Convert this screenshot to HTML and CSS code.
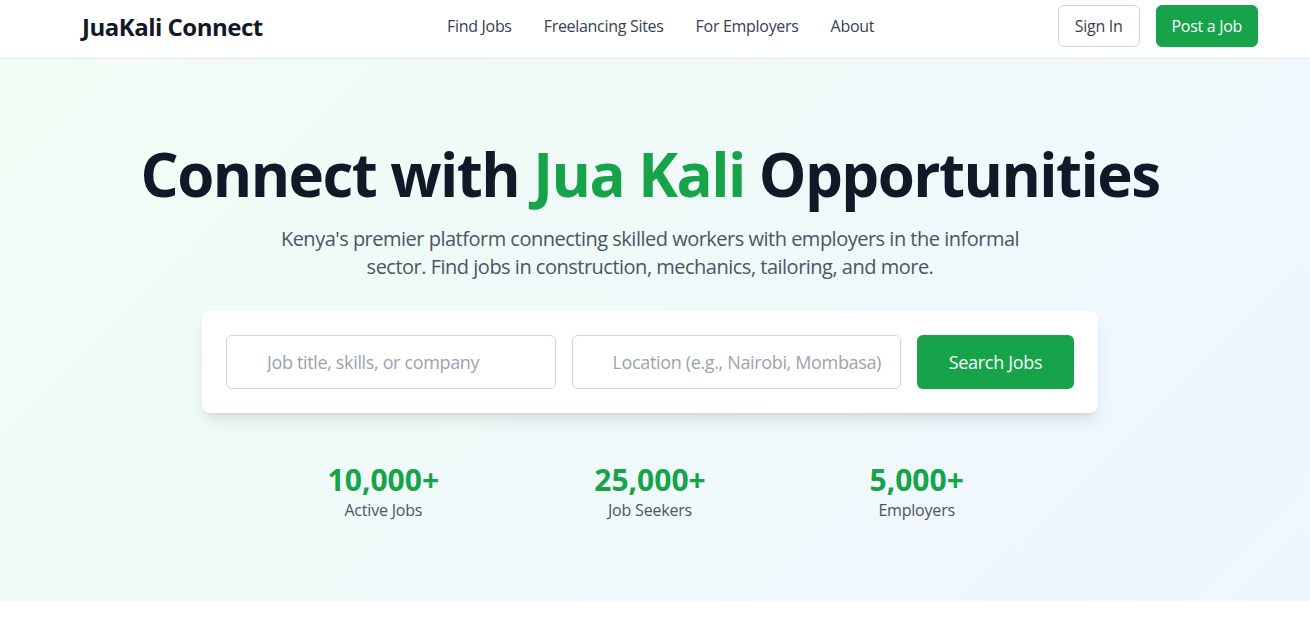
FILE: index.html
```html
<!DOCTYPE html>
<html lang="en">
<head>
<meta charset="utf-8">
<title>JuaKali Connect</title>
<link rel="stylesheet" href="styles.css">
</head>
<body>
<header class="site-header">
  <div class="header-inner">
    <div class="logo">JuaKali Connect</div>
    <nav class="main-nav">
      <a href="#">Find Jobs</a>
      <a href="#">Freelancing Sites</a>
      <a href="#">For Employers</a>
      <a href="#">About</a>
    </nav>
    <div class="header-actions">
      <button class="btn btn-outline">Sign In</button>
      <button class="btn btn-primary">Post a Job</button>
    </div>
  </div>
</header>
<section class="hero">
  <div class="hero-inner">
    <h1 class="hero-title">Connect with <span class="accent">Jua Kali</span> Opportunities</h1>
    <p class="hero-sub">Kenya's premier platform connecting skilled workers with employers in the informal sector. Find jobs in construction, mechanics, tailoring, and more.</p>
    <form class="search-card">
      <input class="search-input" type="text" placeholder="Job title, skills, or company">
      <input class="search-input" type="text" placeholder="Location (e.g., Nairobi, Mombasa)">
      <button type="button" class="btn-search">Search Jobs</button>
    </form>
    <div class="stats">
      <div class="stat"><div class="stat-num">10,000+</div><div class="stat-label">Active Jobs</div></div>
      <div class="stat"><div class="stat-num">25,000+</div><div class="stat-label">Job Seekers</div></div>
      <div class="stat"><div class="stat-num">5,000+</div><div class="stat-label">Employers</div></div>
    </div>
  </div>
</section>
</body>
</html>
```
FILE: styles.css
```css
* { box-sizing: border-box; }
html, body { margin: 0; padding: 0; }
body {
  font-family: "Open Sans", "Noto Sans", "Liberation Sans", sans-serif;
  color: #111827;
  background: #fff;
}
.site-header {
  height: 59px;
  border-bottom: 1px solid #e5e7eb;
  background: #fff;
}
.header-inner {
  height: 58px;
  display: flex;
  align-items: center;
  padding: 0 52px 6px 82px;
}
.logo {
  font-size: 24px;
  font-weight: 700;
  letter-spacing: -0.5px;
  color: #111827;
  width: 365px;
}
.main-nav {
  display: flex;
  gap: 32px;
  flex: 1;
}
.main-nav a {
  font-size: 16px;
  letter-spacing: -0.3px;
  color: #374151;
  text-decoration: none;
}
.header-actions {
  display: flex;
  gap: 16px;
}
.btn {
  font-family: inherit;
  font-size: 16px;
  letter-spacing: -0.3px;
  height: 42px;
  padding: 0 15px;
  border-radius: 6px;
  cursor: pointer;
}
.btn-outline {
  padding: 0 16px;
  background: #fff;
  border: 1px solid #d1d5db;
  color: #374151;
}
.btn-primary {
  background: #16a34a;
  border: 1px solid #16a34a;
  color: #fff;
}
.hero {
  height: 542px;
  background: linear-gradient(135deg, #f0fdf4 0%, #eff6ff 100%);
  padding: 80px 10px 0 0;
}
.hero-inner {
  display: flex;
  flex-direction: column;
  align-items: center;
}
.hero-title {
  margin: 0;
  font-size: 60px;
  line-height: 70px;
  font-weight: 700;
  letter-spacing: -1.55px;
  color: #111827;
  text-align: center;
}
.accent { color: #16a34a; }
.hero-sub {
  margin: 16px 0 0;
  max-width: 768px;
  font-size: 20px;
  line-height: 28px;
  letter-spacing: -0.5px;
  color: #4b5563;
  text-align: center;
}
.search-card {
  margin-top: 30px;
  width: 896px;
  background: #fff;
  border-radius: 8px;
  box-shadow: 0 10px 15px -3px rgba(0,0,0,0.1), 0 4px 6px -4px rgba(0,0,0,0.1);
  padding: 24px;
  display: flex;
  gap: 16px;
}
.search-input {
  flex: 1;
  min-width: 0;
  height: 54px;
  border: 1px solid #d1d5db;
  border-radius: 6px;
  padding: 0 12px 0 40px;
  font-family: inherit;
  font-size: 18px;
  letter-spacing: -0.35px;
  color: #111827;
  background: #fff;
}
.search-input::placeholder { color: #9ca3af; }
.btn-search {
  width: 157px;
  height: 54px;
  border: none;
  border-radius: 6px;
  background: #16a34a;
  color: #fff;
  font-family: inherit;
  font-size: 18px;
  letter-spacing: -0.3px;
}
.stats {
  margin-top: 49px;
  width: 768px;
  display: grid;
  grid-template-columns: repeat(3, 1fr);
  gap: 32px;
}
.stat { text-align: center; }
.stat-num {
  font-size: 30px;
  line-height: 36px;
  font-weight: 700;
  color: #16a34a;
}
.stat-label {
  margin-top: 2px;
  font-size: 16px;
  line-height: 20px;
  letter-spacing: -0.2px;
  color: #4b5563;
}
```
